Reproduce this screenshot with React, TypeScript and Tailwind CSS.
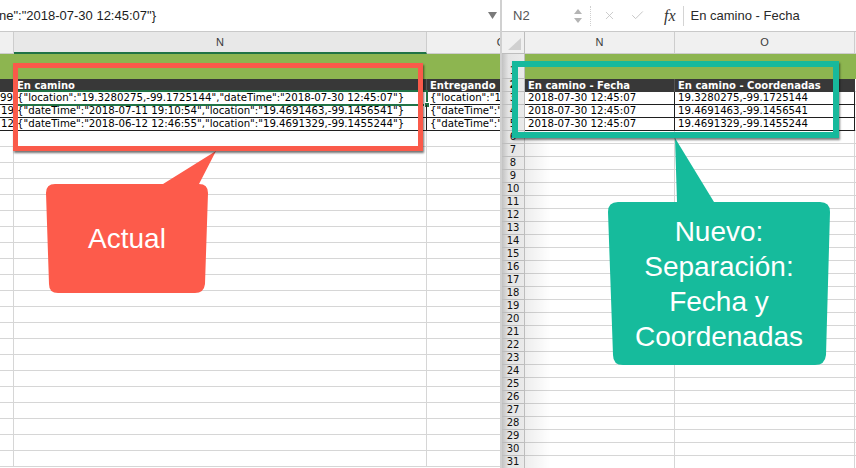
import { X, Check } from "lucide-react"

const SANS = "font-['Liberation_Sans',Arial,sans-serif]"
const CELL = "font-['DejaVu_Sans',Verdana,sans-serif]"

const leftRows = [
  {
    m: "99.",
    n: '{"location":"19.3280275,-99.1725144","dateTime":"2018-07-30 12:45:07"}',
    o: '{"location":"19.3280275,-99.1725144"}',
  },
  {
    m: "19",
    n: '{"dateTime":"2018-07-11 19:10:54","location":"19.4691463,-99.1456541"}',
    o: '{"dateTime":"2018-07-11 19:10:54"}',
  },
  {
    m: "12",
    n: '{"dateTime":"2018-06-12 12:46:55","location":"19.4691329,-99.1455244"}',
    o: '{"dateTime":"2018-06-12 12:46:55"}',
  },
]

const rightRows = [
  { fecha: "2018-07-30 12:45:07", coords: "19.3280275,-99.1725144" },
  { fecha: "2018-07-30 12:45:07", coords: "19.4691463,-99.1456541" },
  { fecha: "2018-07-30 12:45:07", coords: "19.4691329,-99.1455244" },
]

function LeftSheet() {
  return (
    <div className="w-[500px] shrink-0 h-full overflow-hidden flex flex-col bg-white">
      {/* formula bar */}
      <div className="h-[32px] shrink-0 flex items-center justify-between border-b border-[#c9c9c9] pr-[3px]">
        <span className={`${SANS} text-[13px] text-[#1d1d1d] whitespace-nowrap -ml-px`}>
          {'ne":"2018-07-30 12:45:07"}'}
        </span>
        <svg width="9" height="7" viewBox="0 0 9 7">
          <path d="M0 0h9L4.5 7z" fill="#7a7a7a" />
        </svg>
      </div>

      {/* column headers */}
      <div className={`h-[22px] shrink-0 flex ${SANS} text-[11px] text-[#3a3a3a]`}>
        <div className="w-[14px] shrink-0 bg-[#f0f0f0] border-r border-b border-[#cdcdcd]" />
        <div className="w-[413px] shrink-0 bg-[#e8e8e8] border-r border-r-[#cdcdcd] border-b-2 border-b-[#217346] flex items-center justify-center">
          N
        </div>
        <div className="w-[148px] shrink-0 bg-[#f0f0f0] border-b border-[#cdcdcd] flex items-center justify-center">
          O
        </div>
      </div>

      {/* row 1 */}
      <div className="h-[25px] shrink-0 bg-[#8db550]" />

      {/* row 2 */}
      <div className={`h-[13px] shrink-0 flex bg-[#383838] text-white font-bold text-[10px] leading-[13px] ${CELL}`}>
        <div className="w-[14px] shrink-0" />
        <div className="w-[413px] shrink-0 pl-[3px] border-r border-[#555]">En camino</div>
        <div className="w-[148px] shrink-0 pl-[3px] whitespace-nowrap">Entregando</div>
      </div>

      {/* rows 3-5 */}
      {leftRows.map((r, i) => (
        <div key={i} className={`h-[13px] shrink-0 flex border-b border-[#1f1f1f] text-[10.2px] leading-[12px] text-black ${CELL}`}>
          <div className="w-[14px] shrink-0 overflow-hidden whitespace-nowrap text-right">{r.m}</div>
          <div className="w-[413px] shrink-0 pl-[3px] border-r border-[#1f1f1f] whitespace-nowrap relative">
            {r.n}
            {i === 0 && (
              <div className="absolute -left-px -top-[2px] -right-[2px] -bottom-[2px] border-2 border-[#217346]">
                <div className="absolute -right-[4px] -bottom-[4px] w-[6px] h-[6px] bg-[#217346] border border-white" />
              </div>
            )}
          </div>
          <div className="w-[148px] shrink-0 pl-[3px] whitespace-nowrap overflow-hidden">{r.o}</div>
        </div>
      ))}

      {/* empty rows */}
      {Array.from({ length: 21 }).map((_, i) => (
        <div key={i} className="h-[16px] shrink-0 flex border-b border-[#d6d6d6]">
          <div className="w-[14px] shrink-0 border-r border-[#d6d6d6]" />
          <div className="w-[413px] shrink-0 border-r border-[#d6d6d6]" />
          <div className="w-[148px] shrink-0" />
        </div>
      ))}
    </div>
  )
}

function RowNum({ n, tall }: { n: number; tall?: boolean }) {
  return (
    <div
      className={`w-[23px] shrink-0 flex justify-center ${tall ? "items-end pb-[1px]" : "items-center"} bg-linear-to-r from-[#c2c2c2] from-0% via-[#e4e4e4] via-30% to-[#eaeaea] border-r border-b border-[#bdbdbd] text-[10px] leading-[12px] text-[#111] ${CELL}`}
    >
      {n}
    </div>
  )
}

function RightSheet() {
  return (
    <div className="flex-1 h-full overflow-hidden flex flex-col bg-white relative">
      {/* formula bar */}
      <div className={`h-[32px] shrink-0 flex items-center border-b border-[#c9c9c9] ${SANS}`}>
        <span className="w-[66px] shrink-0 pl-[11px] text-[13px] text-[#555]">N2</span>
        <div className="w-[20px] shrink-0 flex flex-col items-center gap-[4px]">
          <svg width="8" height="5" viewBox="0 0 8 5">
            <path d="M0 5L4 0L8 5z" fill="#b4b4b4" />
          </svg>
          <svg width="8" height="5" viewBox="0 0 8 5">
            <path d="M0 0L4 5L8 0z" fill="#b4b4b4" />
          </svg>
        </div>
        <div className="ml-[2px] h-[20px] border-l border-dotted border-[#cfcfcf]" />
        <X size={13} strokeWidth={1.5} className="ml-[12px] text-[#c2c2c2]" />
        <Check size={15} strokeWidth={1.5} className="ml-[14px] text-[#c2c2c2]" />
        <span className="ml-[19px] font-['Liberation_Serif',serif] italic text-[16px] text-[#333]">fx</span>
        <div className="ml-[7px] h-[20px] border-l border-[#d4d4d4]" />
        <span className="ml-[7px] text-[13px] text-[#2a2a2a] whitespace-nowrap">En camino - Fecha</span>
      </div>

      {/* column headers */}
      <div className={`h-[22px] shrink-0 flex bg-[#f0f0f0] ${SANS} text-[11px] text-[#3a3a3a]`}>
        <div className="w-[23px] shrink-0 border-r border-b border-[#bdbdbd] flex items-end justify-end p-[3px]">
          <svg width="13" height="12" viewBox="0 0 13 12">
            <path d="M13 0V12H0z" fill="#d0d0d0" />
          </svg>
        </div>
        <div className="w-[150px] shrink-0 border-r border-b border-[#cdcdcd] flex items-center justify-center">N</div>
        <div className="w-[180px] shrink-0 border-r border-b border-[#cdcdcd] flex items-center justify-center">O</div>
        <div className="flex-1 border-b border-[#cdcdcd]" />
      </div>

      {/* row 1 */}
      <div className="h-[25px] shrink-0 flex">
        <RowNum n={1} tall />
        <div className="flex-1 bg-[#8db550]" />
      </div>

      {/* row 2 */}
      <div className={`h-[13px] shrink-0 flex text-white font-bold text-[10px] leading-[13px] ${CELL}`}>
        <RowNum n={2} />
        <div className="w-[150px] shrink-0 bg-[#383838] pl-[3px] border-r border-[#555] whitespace-nowrap">En camino - Fecha</div>
        <div className="w-[180px] shrink-0 bg-[#383838] pl-[3px] whitespace-nowrap">En camino - Coordenadas</div>
        <div className="flex-1 border-b border-[#d6d6d6]" />
      </div>

      {/* rows 3-5 */}
      {rightRows.map((r, i) => (
        <div key={i} className={`h-[13px] shrink-0 flex text-[10.2px] leading-[12px] text-black ${CELL}`}>
          <RowNum n={i + 3} />
          <div className="w-[150px] shrink-0 pl-[3px] border-r border-b border-[#1f1f1f] whitespace-nowrap">{r.fecha}</div>
          <div className="w-[180px] shrink-0 pl-[3px] border-r border-b border-[#1f1f1f] whitespace-nowrap">{r.coords}</div>
          <div className="flex-1 border-b border-[#d6d6d6]" />
        </div>
      ))}

      {/* empty rows */}
      {Array.from({ length: 26 }).map((_, i) => (
        <div key={i} className="h-[13px] shrink-0 flex">
          <RowNum n={i + 6} />
          <div className="w-[150px] shrink-0 border-r border-b border-[#d6d6d6]" />
          <div className="w-[180px] shrink-0 border-r border-b border-[#d6d6d6]" />
          <div className="flex-1 border-b border-[#d6d6d6]" />
        </div>
      ))}

      {/* frozen pane shading */}
      <div className="absolute left-[23px] top-[131px] bottom-0 w-[26px] bg-linear-to-r from-black/[0.07] to-transparent pointer-events-none" />
    </div>
  )
}

export default function App() {
  return (
    <div className="w-[856px] h-[468px] relative overflow-hidden flex bg-white">
      <LeftSheet />
      <div className="w-[2px] shrink-0 bg-[#d0d0d0]" />
      <RightSheet />

      {/* callout shapes */}
      <svg className="absolute left-0 top-0 pointer-events-none" width="856" height="468" viewBox="0 0 856 468">
        <path
          d="M55 184 H163 L216 151 L199 184 Q208 184 208 193 L205 284 Q204 293 195 293 H58 Q49 293 49 284 L46 193 Q46 184 55 184 Z"
          fill="#fd5b4b"
        />
        <path
          d="M618 202 H677 L675 138 L714 202 H820 Q830 202 830 212 L826 355 Q825 365 815 365 H623 Q613 365 613 355 L608 212 Q608 202 618 202 Z"
          fill="#16bb9c"
        />
      </svg>

      {/* highlight frames */}
      <div className="absolute left-[13px] top-[63px] w-[410px] h-[88px] border-[5px] border-[#fa5a4a] shadow-[1px_2px_2px_rgba(0,0,0,0.55)]" />
      <div className="absolute left-[512px] top-[61px] w-[327px] h-[77px] border-[6px] border-[#17b99c] shadow-[1px_2px_2px_rgba(0,0,0,0.5)]" />

      {/* callout texts */}
      <div className={`absolute left-[46px] top-[184px] w-[162px] h-[109px] flex items-center justify-center text-white text-[28px] ${SANS}`}>
        Actual
      </div>
      <div className={`absolute left-[608px] top-[202px] w-[222px] h-[163px] flex items-center justify-center text-center text-white text-[28px] leading-[35px] ${SANS}`}>
        <div>
          Nuevo:
          <br />
          Separación:
          <br />
          Fecha y
          <br />
          Coordenadas
        </div>
      </div>
    </div>
  )
}
